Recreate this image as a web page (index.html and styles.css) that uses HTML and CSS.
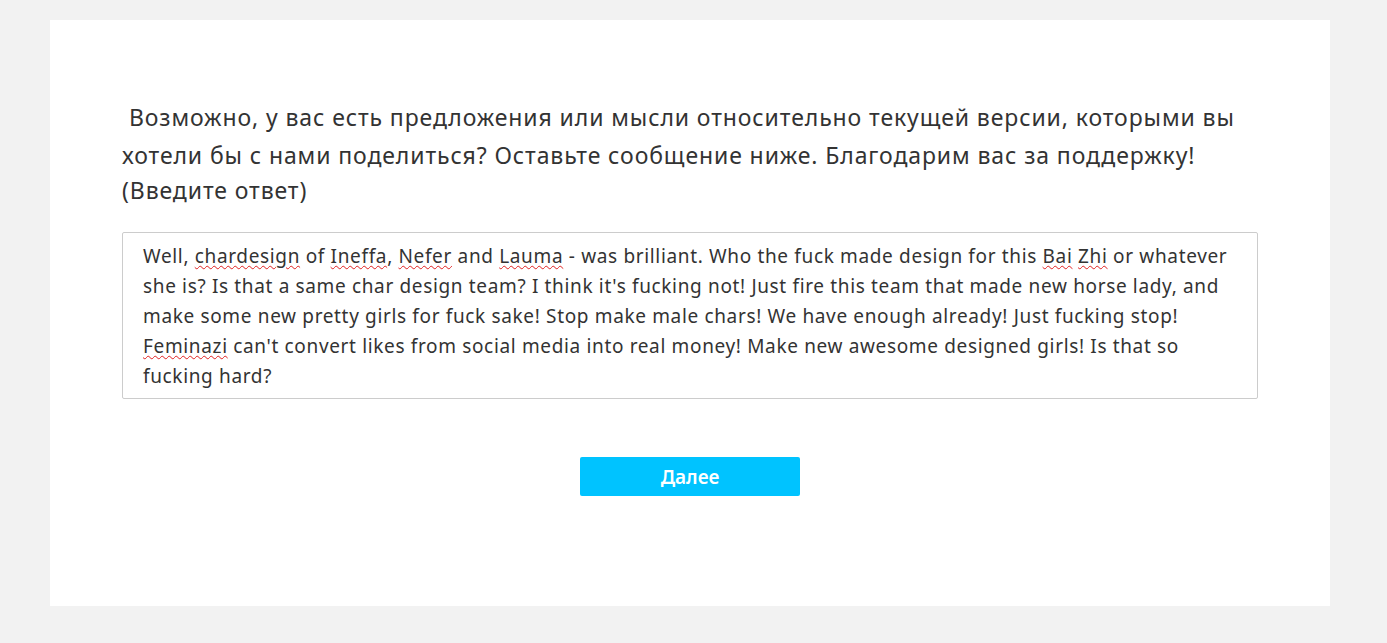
FILE: index.html
```html
<!DOCTYPE html>
<html lang="ru">
<head>
<meta charset="utf-8">
<title>Опрос</title>
<link rel="stylesheet" href="styles.css">
</head>
<body>
<main class="card">
  <div class="question">
    <p class="q-text">&nbsp;Возможно, у вас есть предложения или мысли относительно текущей версии, которыми вы<br>хотели бы с нами поделиться? Оставьте сообщение ниже. Благодарим вас за поддержку!</p>
    <p class="q-hint">(Введите ответ)</p>
  </div>
  <div class="answer">Well, <span class="sp">chardesign</span> of <span class="sp">Ineffa</span>, <span class="sp">Nefer</span> and <span class="sp">Lauma</span> - was brilliant. Who the fuck made design for this <span class="sp">Bai</span> <span class="sp">Zhi</span> or whatever<br>she is? Is that a same char design team? I think it's fucking not! Just fire this team that made new horse lady, and<br>make some new pretty girls for fuck sake! Stop make male chars! We have enough already! Just fucking stop!<br><span class="sp">Feminazi</span> can't convert likes from social media into real money! Make new awesome designed girls! Is that so<br>fucking hard?</div>
  <div class="actions">
    <button class="next" type="button">Далее</button>
  </div>
</main>
</body>
</html>
```
FILE: styles.css
```css
html, body {
  margin: 0;
  padding: 0;
  background: #f2f2f2;
  font-family: "Noto Sans", "Open Sans", sans-serif;
  color: #333;
}
body {
  padding: 20px 57px 37px 50px;
}
.card {
  background: #fff;
  height: 586px;
  box-sizing: border-box;
  padding: 78px 72px 0 72px;
}
.q-text {
  margin: 0;
  font-size: 23px;
  letter-spacing: 0.9px;
  line-height: 38px;
  white-space: nowrap;
}
.q-hint {
  margin: 5px 0 0 0;
  font-size: 23px;
  letter-spacing: 0.9px;
  line-height: 22px;
}
.answer {
  margin-top: 31px;
  border: 1px solid #ccc;
  border-radius: 2px;
  padding: 8px 20px 7px 20px;
  font-size: 19px;
  letter-spacing: 0.65px;
  line-height: 30px;
  white-space: nowrap;
  height: 150px;
}
.sp {
  text-decoration: underline wavy #e02020;
  text-decoration-thickness: 1px;
  text-underline-offset: 2px;
}
.actions {
  display: flex;
  justify-content: center;
  margin-top: 58px;
}
.next {
  width: 220px;
  height: 39px;
  border: none;
  border-radius: 2px;
  background: #00c3ff;
  color: #fff;
  font-family: inherit;
  font-size: 19px;
  font-weight: 600;
  padding: 0;
}
```
